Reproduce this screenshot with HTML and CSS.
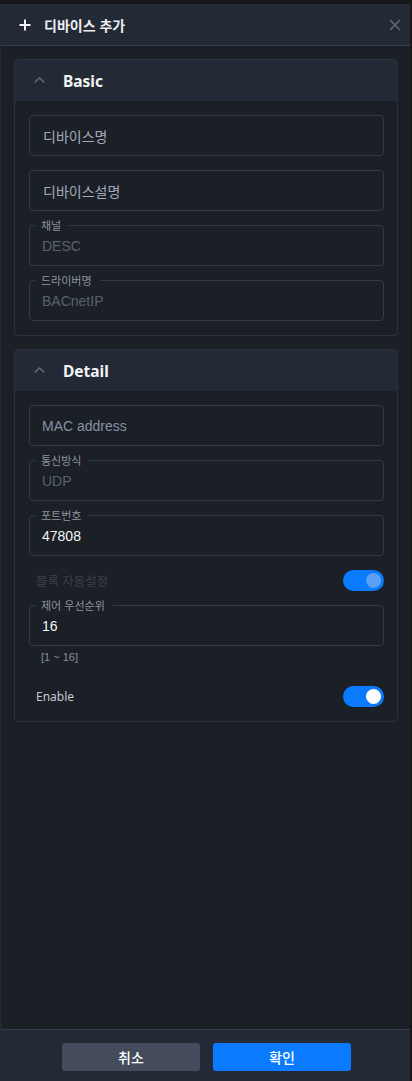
FILE: index.html
```html
<!DOCTYPE html>
<html lang="ko">
<head>
<meta charset="utf-8">
<title>디바이스 추가</title>
<link rel="stylesheet" href="styles.css">
</head>
<body>
<div class="panel">
  <header class="panel-head">
    <svg class="plus" width="12" height="12" viewBox="0 0 12 12"><path d="M6 0.5V11.5M0.5 6H11.5" stroke="#f0f2f5" stroke-width="2" fill="none"/></svg>
    <span class="panel-title">디바이스 추가</span>
    <svg class="close" width="12" height="12" viewBox="0 0 12 12"><path d="M1 1L11 11M11 1L1 11" stroke="#5d6676" stroke-width="1.7" fill="none"/></svg>
  </header>

  <main class="panel-body">
    <section class="card">
      <div class="card-head">
        <svg class="chev" width="11" height="6" viewBox="0 0 11 6"><path d="M0.8 5.3L5.5 0.9L10.2 5.3" stroke="#5b6477" stroke-width="1.6" fill="none"/></svg>
        <span class="card-title">Basic</span>
      </div>
      <div class="card-body">
        <div class="field"><span class="ph ko">디바이스명</span></div>
        <div class="field"><span class="ph ko">디바이스설명</span></div>
        <div class="field"><span class="label">채널</span><span class="val disabled">DESC</span></div>
        <div class="field"><span class="label">드라이버명</span><span class="val disabled">BACnetIP</span></div>
      </div>
    </section>

    <section class="card">
      <div class="card-head">
        <svg class="chev" width="11" height="6" viewBox="0 0 11 6"><path d="M0.8 5.3L5.5 0.9L10.2 5.3" stroke="#5b6477" stroke-width="1.6" fill="none"/></svg>
        <span class="card-title">Detail</span>
      </div>
      <div class="card-body">
        <div class="field"><span class="ph">MAC address</span></div>
        <div class="field"><span class="label">통신방식</span><span class="val disabled">UDP</span></div>
        <div class="field"><span class="label">포트번호</span><span class="val">47808</span></div>
        <div class="row">
          <span class="row-label dim">블록 자동설정</span>
          <span class="toggle on disabled-toggle"><span class="knob"></span></span>
        </div>
        <div class="group">
          <div class="field"><span class="label">제어 우선순위</span><span class="val">16</span></div>
          <div class="hint">[1 ~ 16]</div>
        </div>
        <div class="row enable-row">
          <span class="row-label">Enable</span>
          <span class="toggle on"><span class="knob"></span></span>
        </div>
      </div>
    </section>
  </main>

  <footer class="panel-foot">
    <button class="btn cancel">취소</button>
    <button class="btn ok">확인</button>
  </footer>
</div>
</body>
</html>
```

FILE: styles.css
```css
* { box-sizing: border-box; }
html, body { margin: 0; padding: 0; }
body {
  background: #151719;
  width: 412px;
  height: 1081px;
  overflow: hidden;
  font-family: "Noto Sans", "Noto Sans CJK KR", sans-serif;
}
.panel {
  margin-top: 4px;
  width: 410px;
  height: 1077px;
  display: flex;
  flex-direction: column;
  background: #1b1f26;
  border-left: 1px solid #262b34;
}
.panel-head {
  height: 42px;
  flex: none;
  display: flex;
  align-items: center;
  background: #242a35;
  border-bottom: 1px solid #394050;
  padding: 0 9px 0 18px;
}
.plus { flex: none; }
.panel-title {
  margin-left: 13px;
  font-family: "Noto Sans CJK KR", sans-serif;
  font-weight: 700;
  font-size: 14px;
  color: #eceef1;
  flex: 1;
}
.close { flex: none; }
.panel-body {
  flex: 1;
  padding: 13px 12px 14px 13px;
  display: flex;
  flex-direction: column;
  gap: 13px;
}
.card {
  border: 1px solid #2d333e;
  border-radius: 4px;
  overflow: hidden;
}
.card-head {
  height: 41px;
  background: #242a35;
  display: flex;
  align-items: center;
  padding-left: 19px;
}
.chev { flex: none; margin-top: -1px; }
.card-title {
  margin-left: 18px;
  font-family: "Noto Sans", sans-serif;
  font-weight: 700;
  font-size: 15.5px;
  color: #f3f4f6;
}
.card-body {
  padding: 14px 13px 14px 14px;
  display: flex;
  flex-direction: column;
  gap: 14px;
}
.field {
  position: relative;
  height: 41px;
  border: 1px solid #343a46;
  border-radius: 4px;
  display: flex;
  align-items: center;
  padding-left: 12px;
  font-family: "Liberation Sans", "Noto Sans CJK KR", sans-serif;
  font-size: 14px;
}
.ph { color: #8791a3; }
.ph.ko { font-family: "Noto Sans CJK KR", sans-serif; color: #a4acba; padding-left: 1px; }
.val { color: #f4f5f7; }
.val.disabled { color: #5a616d; }
.label {
  position: absolute;
  top: -8px;
  left: 5px;
  padding: 0 8px 0 6px;
  background: #1b1f26;
  font-family: "Noto Sans CJK KR", sans-serif;
  font-size: 11px;
  line-height: 14px;
  color: #8d939d;
}
.row {
  height: 21px;
  display: flex;
  align-items: center;
  justify-content: space-between;
  padding-left: 7px;
}
.row-label {
  font-family: "Noto Sans", "Noto Sans CJK KR", sans-serif;
  font-size: 12px;
  color: #c4c8ce;
}
.row-label.dim { color: #3b414b; font-size: 12.5px; }
.toggle {
  width: 41px;
  height: 21px;
  border-radius: 11px;
  background: #0a7bff;
  display: flex;
  align-items: center;
  justify-content: flex-end;
  padding-right: 3px;
}
.knob {
  width: 15px;
  height: 15px;
  border-radius: 50%;
  background: #ffffff;
}
.disabled-toggle .knob { background: #5aa0f5; }
.group { display: flex; flex-direction: column; }
.hint {
  margin-top: 4px;
  padding-left: 12px;
  font-family: "Liberation Sans", sans-serif;
  font-size: 11px;
  line-height: 14px;
  color: #8a909a;
}
.enable-row { margin-top: 8px; }
.panel-foot {
  height: 52px;
  flex: none;
  background: #242a35;
  border-top: 1px solid #353c4a;
  display: flex;
  justify-content: center;
  gap: 13px;
  padding: 13px 0 0 2px;
}
.btn {
  width: 138px;
  height: 28px;
  border: none;
  border-radius: 3px;
  font-family: "Noto Sans CJK KR", sans-serif;
  font-size: 14px;
  font-weight: 500;
  color: #ffffff;
  padding: 0;
}
.cancel { background: #434b5c; }
.ok { background: #0a7bff; }
```
